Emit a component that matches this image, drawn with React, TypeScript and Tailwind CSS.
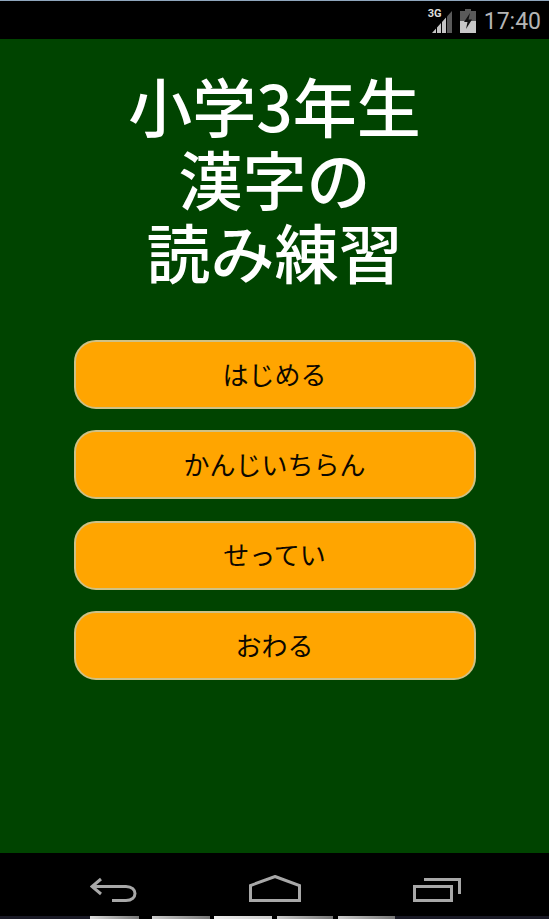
const jp = "font-['Noto_Sans_CJK_JP','Noto_Sans_CJK_SC',sans-serif]";

const menuItems = ["はじめる", "かんじいちらん", "せってい", "おわる"];

function StatusBar() {
  return (
    <div className="h-[39px] shrink-0 bg-black border-t border-[#8fa6bd] flex items-center justify-end pt-[2px] pr-[8px]">
      <div className="relative w-[24px] h-[24px] mr-[6px]">
        <svg width="24" height="24" viewBox="0 0 24 24" className="absolute inset-0">
          <path d="M2 24 L6 19.5 V24 Z M7 18.4 L11 14 V24 H7 Z M12 12.9 L16 8.5 V24 H12 Z" fill="#c4c4c4" />
          <path d="M17 7.4 L22 2 V24 H17 Z" fill="#5a5a5a" />
        </svg>
        <span className="absolute left-[-2px] top-[-1px] text-[11px] leading-[12px] font-bold text-[#ddd] font-['Roboto',sans-serif]">3G</span>
      </div>
      <svg width="16" height="24" viewBox="0 0 16 24" className="mr-[8px]">
        <path d="M5 0 H11 V2 H16 V24 H0 V2 H5 Z" fill="#5a5a5a" />
        <path d="M0 12 H16 V24 H0 Z" fill="#c8c8c8" />
        <path d="M10 4 L4 13 H7.5 L6 20 L12 10.5 H8.5 Z" fill="#111" />
      </svg>
      <span className="text-[23px] leading-none text-[#b5b5b5] font-['Roboto',sans-serif]">17:40</span>
    </div>
  );
}

function MenuButton({ label }: { label: string }) {
  return (
    <button className={`w-[402px] h-[69px] pb-[2px] rounded-[22px] bg-[#ffa500] border-2 border-[#cfc184] text-[26px] leading-none font-normal text-[#0c0800] ${jp}`}>
      {label}
    </button>
  );
}

function NavBar() {
  return (
    <div className="h-[66px] shrink-0 bg-black relative">
      <div className="flex items-start justify-between pl-[90px] pr-[88px] pt-[22px]">
        <svg width="47" height="28" viewBox="0 0 47 28" fill="none" stroke="#a8a8a8" strokeWidth="3">
          <path d="M11 4 L2 11.5 L11 19" />
          <path d="M2 11.5 H36 C48 11.5 48 25.5 36 25.5 H22" />
        </svg>
        <svg width="52" height="28" viewBox="0 0 52 28" fill="none" stroke="#a8a8a8" strokeWidth="3">
          <path d="M26 1.5 L50.5 10.5 V25.5 H1.5 V10.5 Z" />
        </svg>
        <svg width="48" height="28" viewBox="0 0 48 28" fill="none" stroke="#a8a8a8" strokeWidth="3">
          <path d="M1.5 11.5 H38.5 V25.5 H1.5 Z" />
          <path d="M11 4.5 H46.5 V19" />
        </svg>
      </div>
      <div className="absolute bottom-0 left-0 right-0 h-[3px] flex bg-[#1a1a26]">
        <div className="w-[90px]" />
        <div className="w-[49px] bg-gradient-to-r from-[#ddd] to-[#777]" />
        <div className="w-[13px] bg-black" />
        <div className="w-[58px] bg-gradient-to-r from-[#ccc] to-[#777]" />
        <div className="w-[4px] bg-black" />
        <div className="w-[58px] bg-gradient-to-r from-[#eee] to-[#ccc]" />
        <div className="w-[5px] bg-black" />
        <div className="w-[56px] bg-gradient-to-r from-[#ccc] to-[#777]" />
        <div className="w-[5px] bg-black" />
        <div className="w-[57px] bg-gradient-to-r from-[#ccc] to-[#777]" />
      </div>
    </div>
  );
}

export default function App() {
  return (
    <div className="w-[549px] h-[919px] flex flex-col overflow-hidden bg-[#004400]">
      <StatusBar />
      <main className="flex-1 flex flex-col items-center">
        <h1 className={`mt-[29px] text-center text-white text-[64px] leading-[73px] font-medium ${jp}`}>
          小学3年生
          <br />
          漢字の
          <br />
          読み練習
        </h1>
        <div className="mt-[53px] flex flex-col gap-[21.4px]">
          {menuItems.map((item) => (
            <MenuButton key={item} label={item} />
          ))}
        </div>
      </main>
      <NavBar />
    </div>
  );
}
